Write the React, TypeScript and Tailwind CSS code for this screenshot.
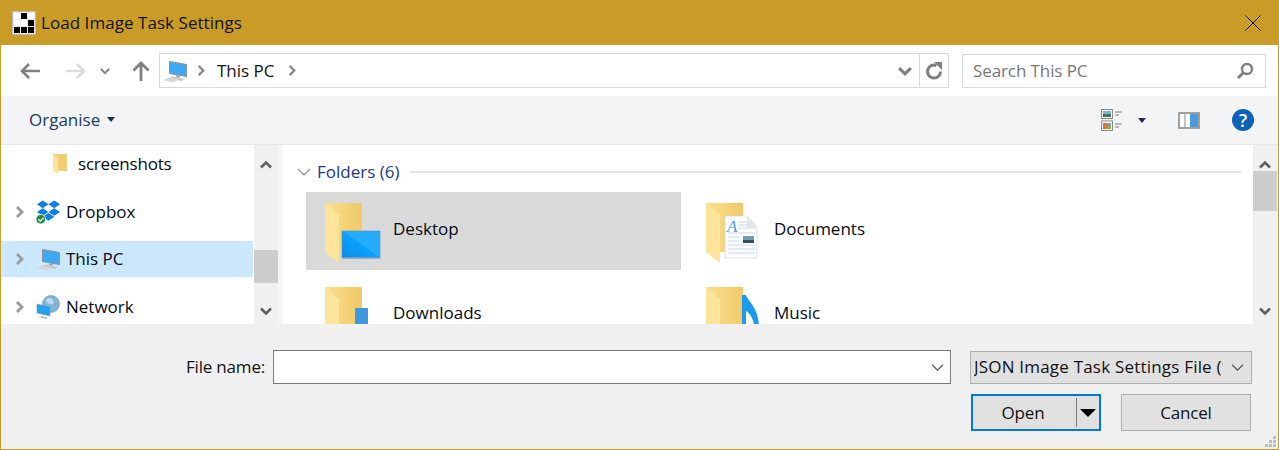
import React from 'react';

const PcIcon = ({ className = '' }: { className?: string }) => (
  <svg className={className} width="24" height="24" viewBox="0 0 24 24">
    <path d="M6.500 2.500l17 3v12l-17-3z" fill="#3fa8f0" stroke="#8095a8" strokeWidth="1" />
    <path d="M13 16l4 .7v2l-4-.7z" fill="#9aa7b3" />
    <path d="M7 18.500l3-1 12 2.500-4 2z" fill="#c4c8cc" />
    <path d="M0.500 21l6-2.500 9 2.500-6.500 2.500z" fill="#d4d7da" />
  </svg>
);

const Chevron = ({ dir = 'right', color = '#8a8a8a', size = 12, width = 2.4 }: { dir?: 'right' | 'left' | 'up' | 'down'; color?: string; size?: number; width?: number }) => {
  const d = { right: 'M4 1l5 5-5 5', left: 'M8 1L3 6l5 5', up: 'M1 8.5l5-5 5 5', down: 'M1 3.5l5 5 5-5' }[dir];
  return (
    <svg width={size} height={size} viewBox="0 0 12 12" className="shrink-0">
      <path d={d} fill="none" stroke={color} strokeWidth={width} />
    </svg>
  );
};

const FolderBase = () => (
  <>
    <path d="M0 0h37v49H14z" fill="url(#fb)" />
    <path d="M0 0l14 12v48L0 49z" fill="#fde49b" />
  </>
);

const Defs = () => (
  <defs>
    <linearGradient id="fb" x1="0" y1="0" x2="1" y2="0">
      <stop offset="0" stopColor="#fbdf8f" />
      <stop offset="1" stopColor="#f0c968" />
    </linearGradient>
    <linearGradient id="sky" x1="0" y1="1" x2="1" y2="0">
      <stop offset="0" stopColor="#0a8ee8" />
      <stop offset="0.5" stopColor="#0aa0ff" />
      <stop offset="0.51" stopColor="#22abff" />
      <stop offset="1" stopColor="#28aaf8" />
    </linearGradient>
  </defs>
);

const DesktopFolder = () => (
  <svg width="60" height="62" viewBox="0 0 60 62" className="shrink-0">
    <Defs />
    <FolderBase />
    <rect x="17" y="28" width="38" height="27" fill="url(#sky)" stroke="#4b93c4" strokeWidth="0.6" />
    <rect x="17" y="54" width="38" height="1.5" fill="#6e9fc0" />
  </svg>
);

const DocumentsFolder = () => (
  <svg width="60" height="62" viewBox="0 0 60 62" className="shrink-0">
    <Defs />
    <FolderBase />
    <path d="M19 13h22l10 11v31H19z" fill="#fdfdfe" stroke="#d4d8dc" strokeWidth="0.8" />
    <path d="M41 13l10 11H41z" fill="#e4e6e8" />
    <g stroke="#c8d9ea" strokeWidth="1">
      <path d="M32 19h9M32 22h10M32 25h18M22 30h27M22 34h12M22 38h12M22 42h27M22 46h27M22 50h27" />
    </g>
    <text x="21" y="29" fontSize="17" fontStyle="italic" fill="#4b9bdc" fontFamily="Liberation Serif">
      A
    </text>
    <rect x="37" y="33" width="11" height="7" fill="#6d9cb8" />
    <rect x="37" y="37" width="11" height="3" fill="#2f4e60" />
  </svg>
);

const DownloadsFolder = () => (
  <svg width="60" height="62" viewBox="0 0 60 62" className="shrink-0">
    <Defs />
    <FolderBase />
    <rect x="30" y="21" width="13" height="40" fill="#3f97e0" />
  </svg>
);

const MusicFolder = () => (
  <svg width="60" height="62" viewBox="0 0 60 62" className="shrink-0">
    <Defs />
    <FolderBase />
    <path d="M36 8h4c1 5 12 12 13 30h-5c-1-8-5-12-8-14v16h-4z" fill="#1b9af0" />
  </svg>
);

const DropboxIcon = () => (
  <svg width="24" height="25" viewBox="0 0 25 25" className="shrink-0">
    <path d="M7 0l6 4-6 4-6-4zM19 0l6 4-6 4-6-4zM1 12l6-4 6 4-6 4zM25 12l-6-4-6 4 6 4z" fill="#0d7de8" />
    <path d="M7 17l6-4 6 4-6 4z" fill="#0d7de8" />
    <circle cx="5" cy="19.5" r="5" fill="#1f8a3a" stroke="#fff" strokeWidth="0.8" />
    <path d="M2.500 19.500l2 2 3.500-3.500" fill="none" stroke="#fff" strokeWidth="1.400" />
  </svg>
);

const NetworkIcon = () => (
  <svg width="24" height="24" viewBox="0 0 24 24" className="shrink-0">
    <circle cx="15" cy="9" r="8.500" fill="#7fb3d8" stroke="#5f93b8" strokeWidth="0.600" />
    <path d="M10.500 4c3-2 6-1 7 2s-2 4-4 3-4-2-3-5z" fill="#bcd8ea" />
    <path d="M1 9l13 3v9L1 18z" fill="#27a0ee" stroke="#6f9ab8" strokeWidth="0.600" />
    <path d="M5 21l6 1v2l-6-1z" fill="#b9c0c6" />
  </svg>
);

const ScrollBar = ({ thumbTop, thumbHeight }: { thumbTop: string; thumbHeight: string }) => (
  <div className="relative flex w-[24px] shrink-0 flex-col items-center justify-between bg-[#f0f0f0] pt-[14px] pb-[7px]">
    <Chevron dir="up" color="#606060" size={12} width={2.6} />
    <div className={`absolute left-0 w-[24px] bg-[#cdcdcd] ${thumbTop} ${thumbHeight}`} />
    <Chevron dir="down" color="#606060" size={12} width={2.6} />
  </div>
);

const TreeRow = ({ selected, caret, icon, label, indent }: { selected?: boolean; caret?: boolean; icon: React.ReactNode; label: React.ReactNode; indent: string }) => (
  <div className={`flex h-[36px] shrink-0 items-center ${selected ? '-mt-px bg-[#cce8ff]' : ''} ${indent}`}>
    {caret && (
      <div className="ml-[12px] mr-[11px]">
        <Chevron color="#9a9a9a" size={12} width={2.8} />
      </div>
    )}
    {icon}
    <span className="ml-[6px] text-[#050a14]">{label}</span>
  </div>
);

const FolderTile = ({ selected, icon, label }: { selected?: boolean; icon: React.ReactNode; label: string }) => (
  <div className={`flex h-[78px] items-start pl-[19px] pt-[11px] ${selected ? 'bg-[#d9d9d9]' : ''}`}>
    {icon}
    <span className="ml-[8px] mt-[14px] text-[#050a14]">{label}</span>
  </div>
);

export default function App() {
  return (
    <div
      className="flex h-[450px] w-[1279px] flex-col overflow-hidden border-x border-b border-[#c99b27] text-[17px] leading-[24px]"
      style={{ fontFamily: '"Open Sans", "Noto Sans", sans-serif' }}
    >
      {/* title bar */}
      <div className="flex h-[45px] shrink-0 items-center bg-[#c99b27] pl-[11px] pr-[17px]">
        <svg width="24" height="24" viewBox="0 0 24 24" className="shrink-0">
          <rect x="0.5" y="0.5" width="23" height="23" fill="#e8e8e8" stroke="#bdbdbd" />
          <path d="M9 2h6v6H9zM16 9h6v6h-6zM2 16h6v6H2zM9 16h6v6H9zM16 16h6v6h-6z" fill="#000" />
          <path d="M2 2h6v6H2zM16 2h6v6h-6zM2 9h6v6H2zM9 9h6v6H9z" fill="#fff" />
        </svg>
        <span className="ml-[5px] flex-1 tracking-[0.05px] text-[#111]">Load Image Task Settings</span>
        <svg width="16" height="16" viewBox="0 0 16 16">
          <path d="M0.5 0.5l15 15M15.5 0.5l-15 15" stroke="#111" strokeWidth="1" />
        </svg>
      </div>

      {/* address row */}
      <div className="flex h-[51px] shrink-0 items-center bg-white pl-[18px] pr-[12px]">
        <svg width="22" height="20" viewBox="0 0 22 20" className="shrink-0">
          <path d="M21 10H3M10 3l-7 7 7 7" fill="none" stroke="#808080" strokeWidth="2.600" />
        </svg>
        <svg width="22" height="20" viewBox="0 0 22 20" className="ml-[24px] shrink-0">
          <path d="M1 10h18M12 3l7 7-7 7" fill="none" stroke="#dcdcdc" strokeWidth="2.600" />
        </svg>
        <div className="ml-[13px]">
          <Chevron dir="down" color="#808080" size={10} width={2.4} />
        </div>
        <svg width="20" height="22" viewBox="0 0 20 22" className="ml-[21px] shrink-0">
          <path d="M10 21V3M2.500 10.500L10 3l7.500 7.500" fill="none" stroke="#808080" strokeWidth="2.800" />
        </svg>
        <div className="ml-[8px] flex h-[35px] w-[790px] shrink-0 items-center border border-[#d9d9d9] pl-[3px]">
          <PcIcon />
          <div className="ml-[8px]">
            <Chevron color="#8a8a8a" size={11} width={2.6} />
          </div>
          <span className="ml-[11px] text-[#111]">This PC</span>
          <div className="ml-[11px] flex-1">
            <Chevron color="#8a8a8a" size={11} width={2.6} />
          </div>
          <Chevron dir="down" color="#808080" size={14} width={2.6} />
          <div className="ml-[7px] flex h-full w-[29px] items-center justify-center border-l border-[#d9d9d9]">
            <svg width="18" height="18" viewBox="0 0 18 18">
              <path d="M11.500 3.500A6.500 6.500 0 1 0 15.500 9.500" fill="none" stroke="#808080" strokeWidth="3" />
              <path d="M9 0h8v8z" fill="#808080" />
            </svg>
          </div>
        </div>
        <div className="ml-[13px] flex h-[34px] w-[304px] shrink-0 items-center justify-between border border-[#d9d9d9] pl-[10px] pr-[11px] tracking-[-0.1px] text-[#777]">
          <span>Search This PC</span>
          <svg width="18" height="18" viewBox="0 0 18 18">
            <circle cx="11" cy="7" r="5" fill="none" stroke="#808080" strokeWidth="2.400" />
            <path d="M7.500 10.500L2 16" stroke="#808080" strokeWidth="3" />
          </svg>
        </div>
      </div>

      {/* command bar */}
      <div className="flex h-[49px] shrink-0 items-center border-b border-[#e6e6e6] bg-[#f3f4f6] pl-[28px] pr-[24px]">
        <span className="text-[#1c3a5e]">Organise</span>
        <div className="ml-[7px] mb-[2px] h-0 w-0 border-x-[4px] border-t-[5px] border-x-transparent border-t-[#1c2f4a]" />
        <div className="flex-1" />
        <svg width="22" height="22" viewBox="0 0 22 22" className="shrink-0">
          <rect x="0.500" y="0.500" width="11" height="9" fill="#fff" stroke="#8a8a8a" />
          <rect x="2" y="2" width="8" height="3" fill="#7fb0d8" />
          <rect x="2" y="5" width="8" height="3" fill="#4a7a5a" />
          <rect x="0.500" y="12" width="11" height="9.500" fill="#fff" stroke="#8a8a8a" />
          <rect x="2" y="14" width="4" height="6" fill="#d97a30" />
          <rect x="6" y="14" width="4" height="3" fill="#7a9ac9" />
          <rect x="6" y="17" width="4" height="3" fill="#8ab04a" />
          <path d="M14 3h7M14 6h4M14 15h7M14 18h4" stroke="#808080" strokeWidth="1" />
        </svg>
        <div className="ml-[15px] h-0 w-0 border-x-[4px] border-t-[5px] border-x-transparent border-t-[#1c2f4a]" />
        <svg width="22" height="17" viewBox="0 0 22 17" className="ml-[32px] shrink-0">
          <rect x="1" y="1" width="20" height="15" fill="#fff" stroke="#8a8a8a" strokeWidth="1.600" />
          <rect x="12" y="2" width="8" height="13" fill="#4a9ae0" />
          <path d="M7 1v15" stroke="#8a8a8a" />
        </svg>
        <div className="ml-[32px] flex h-[22px] w-[22px] items-center justify-center rounded-full bg-[#0b62b8] text-[18px] font-semibold text-white">
          ?
        </div>
      </div>

      {/* panes */}
      <div className="flex min-h-0 flex-1 bg-[#f0f0f0] pr-[1px]">
        <div className="flex w-[252px] shrink-0 flex-col gap-[12px] overflow-hidden bg-white pt-[1px]">
          <TreeRow
            indent="pl-[52px]"
            icon={
              <svg width="14" height="20" viewBox="0 0 14 20" className="mr-[5px] shrink-0">
                <path d="M0 0h14v17H5z" fill="#f2cf74" />
                <path d="M0 0l5 3v17l-5-3z" fill="#fde49b" />
              </svg>
            }
            label={<span className="tracking-[-0.2px]">screenshots</span>}
          />
          <TreeRow caret indent="" icon={<DropboxIcon />} label="Dropbox" />
          <TreeRow selected caret indent="" icon={<PcIcon className="shrink-0" />} label="This PC" />
          <TreeRow caret indent="" icon={<NetworkIcon />} label="Network" />
        </div>
        <div className="w-px shrink-0 bg-white" />
        <ScrollBar thumbTop="top-[105px]" thumbHeight="h-[33px]" />
        <div className="w-[5px] shrink-0 bg-[#f5f5f5]" />
        <div className="flex min-w-0 flex-1 flex-col overflow-hidden bg-white pl-[14px] pt-[15px]">
          <div className="flex h-[24px] shrink-0 items-center pr-[12px]">
            <Chevron dir="down" color="#808080" size={14} width={1} />
            <span className="ml-[6px] text-[#1c3a7e]">Folders (6)</span>
            <div className="ml-[11px] h-[2px] flex-1 bg-[#e6e6e6]" />
          </div>
          <div className="mt-[8px] grid grid-cols-[375px_375px] gap-x-[6px] gap-y-[6px] pl-[9px]">
            <FolderTile selected icon={<DesktopFolder />} label="Desktop" />
            <FolderTile icon={<DocumentsFolder />} label="Documents" />
            <FolderTile icon={<DownloadsFolder />} label="Downloads" />
            <FolderTile icon={<MusicFolder />} label="Music" />
          </div>
        </div>
        <ScrollBar thumbTop="top-[26px]" thumbHeight="h-[40px]" />
      </div>

      {/* footer */}
      <div className="relative flex h-[125px] shrink-0 flex-col bg-[#f0f0f0] pr-[26px] pt-[26px] tracking-[-0.2px]">
        <div className="flex items-center justify-end">
          <span className="text-[#111]">File name:</span>
          <div className="ml-[8px] flex h-[34px] w-[678px] items-center justify-end border border-[#7a7a7a] bg-white pr-[6px]">
            <Chevron dir="down" color="#555" size={13} width={1.1} />
          </div>
          <div className="ml-[19px] flex h-[33px] w-[282px] items-center justify-between border border-[#adadad] bg-[#e1e1e1] pl-[3px] pr-[7px]">
            <span className="w-[249px] overflow-hidden whitespace-nowrap tracking-[0.2px] text-[#111]">JSON Image Task Settings File (*.json)</span>
            <Chevron dir="down" color="#555" size={13} width={1.1} />
          </div>
        </div>
        <div className="mt-[10px] flex justify-end gap-[20px] pr-[1px]">
          <div className="flex h-[37px] w-[130px] items-center border-2 border-[#0078d7] bg-[#e1e1e1] text-[#111]">
            <span className="w-[100px] text-center">Open</span>
            <div className="ml-[3px] h-[29px] w-px bg-[#777]" />
            <div className="ml-[3px] h-0 w-0 border-x-[8px] border-t-[8px] border-x-transparent border-t-black" />
          </div>
          <div className="flex h-[37px] w-[130px] items-center justify-center border border-[#adadad] bg-[#e1e1e1] text-[#111]">
            Cancel
          </div>
        </div>
        <svg width="12" height="12" viewBox="0 0 12 12" className="absolute bottom-[1px] right-[1px]">
          <path d="M8 0h3v3H8zM4 4h3v3H4zM8 4h3v3H8zM0 8h3v3H0zM4 8h3v3H4zM8 8h3v3H8z" fill="#bdbdbd" />
        </svg>
      </div>
    </div>
  );
}
